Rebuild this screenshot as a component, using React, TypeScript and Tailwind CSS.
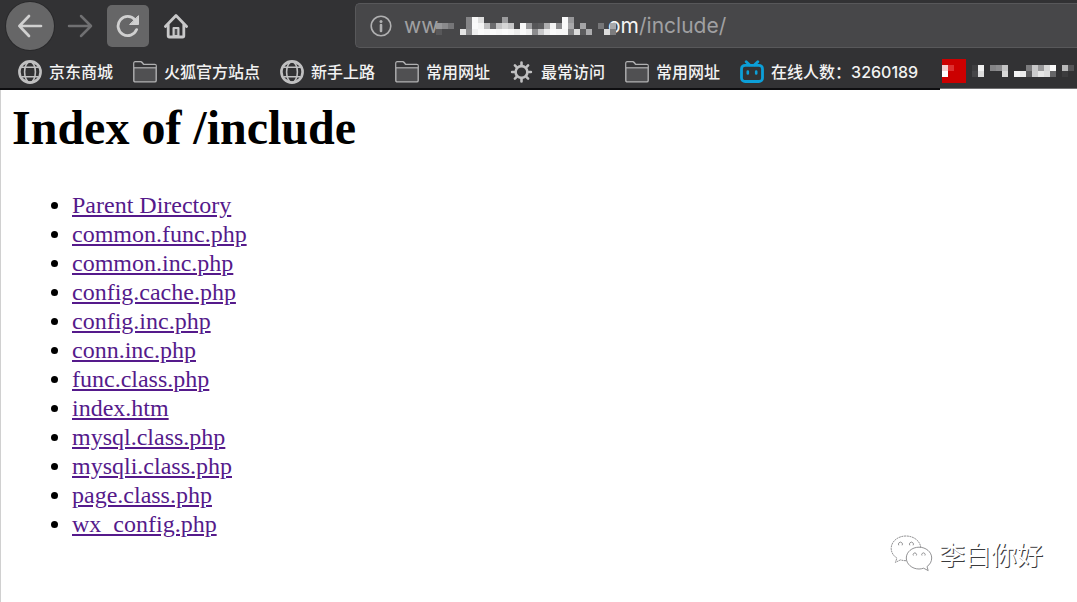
import React from "react";

type Cell = [x: number, y: number, fill: string];

const hostCells: Cell[] = [
  [0, 1, "#98989a"], [1, 1, "#8a8a8c"], [2, 1, "#767678"], [0, 2, "#58585a"],
  [4, 2, "#e4e4e4"],
  [5, 0, "#858587"], [5, 1, "#858587"], [5, 2, "#8c8c8e"],
  [6, 0, "#f8f8f8"], [6, 1, "#fafafa"], [6, 2, "#f0f0f0"],
  [7, 0, "#dedede"], [7, 1, "#f4f4f4"], [7, 2, "#fafafa"],
  [8, 1, "#bebebf"], [8, 2, "#f6f6f6"],
  [9, 1, "#6c6c6e"], [9, 2, "#fafafa"],
  [10, 1, "#c2c2c3"], [10, 2, "#f6f6f6"],
  [11, 0, "#9c9c9e"], [11, 1, "#d6d6d6"], [11, 2, "#fafafa"],
  [12, 1, "#c6c6c7"], [12, 2, "#f6f6f6"],
  [13, 2, "#ececec"],
  [14, 1, "#fafafa"], [14, 2, "#fafafa"],
  [15, 1, "#9c9c9e"], [15, 2, "#f0f0f0"],
  [16, 1, "#565658"], [16, 2, "#8c8c8e"],
  [17, 1, "#5c5c5e"], [17, 2, "#c8c8c9"],
  [18, 1, "#aeaeaf"], [18, 2, "#ececec"],
  [19, 1, "#f4f4f4"], [19, 2, "#fafafa"],
  [20, 1, "#8c8c8e"], [20, 2, "#f6f6f6"],
  [21, 0, "#fafafa"], [21, 1, "#fafafa"], [21, 2, "#f6f6f6"],
  [22, 0, "#98989a"], [22, 1, "#a8a8aa"], [22, 2, "#828284"],
  [23, 2, "#dcdcdc"],
  [24, 1, "#a4a4a6"], [24, 2, "#5c5c5e"],
  [25, 2, "#acacae"],
  [27, 1, "#767678"],
  [28, 2, "#dcdcdc"],
  [29, 1, "#a8a8aa"], [29, 2, "#7c7c7e"],
];

const titleCells: Cell[] = [
  [0, 0, "#3e3e40"], [0, 1, "#464648"],
  [1, 0, "#f0f0f0"], [1, 1, "#dcdcdc"],
  [3, 0, "#848486"], [4, 0, "#8c8c8e"],
  [5, 0, "#c4c4c5"], [5, 1, "#d8d8d8"],
  [7, 1, "#f4f4f4"], [8, 1, "#ececec"],
  [9, 0, "#7c7c7e"], [9, 1, "#5c5c5e"],
  [10, 0, "#c8c8c9"], [10, 1, "#cccccd"],
  [11, 0, "#98989a"], [11, 1, "#e6e6e6"],
  [12, 0, "#d6d6d6"], [12, 1, "#dcdcdc"],
  [13, 0, "#fafafa"], [13, 1, "#666668"],
  [15, 0, "#b8b8b9"], [15, 1, "#3c3c3e"],
  [16, 0, "#545456"],
];

function Pixels({ cells, columns, rows, className }: { cells: Cell[]; columns: number; rows: number; className?: string }) {
  return (
    <svg
      aria-hidden="true"
      width={columns * 6}
      height={rows * 6}
      viewBox={`0 0 ${columns} ${rows}`}
      shapeRendering="crispEdges"
      className={className}
    >
      {cells.map(([x, y, fill]) => (
        <rect key={`${x}-${y}`} x={x} y={y} width="1" height="1" fill={fill} />
      ))}
    </svg>
  );
}

function GlobeIcon() {
  return (
    <svg aria-hidden="true" width="24" height="24" viewBox="0 0 24 24" fill="none" stroke="#c0c0c1">
      <circle cx="12" cy="12" r="10.6" strokeWidth="2.6" />
      <ellipse cx="12" cy="12" rx="5.4" ry="10.4" strokeWidth="1.6" />
      <path d="M3.5 7.2h17M3.5 16.800h17" strokeWidth="1.5" />
    </svg>
  );
}

function FolderIcon() {
  return (
    <svg aria-hidden="true" width="24" height="24" viewBox="0 0 24 24" fill="none" stroke="#b0b0b1" strokeWidth="1.4" strokeLinejoin="round">
      <path d="M.8 20.4V3.400c0-1 .5-1.6 1.500-1.600h5.400c.8 0 1.200.3 1.700.9l1.300 1.700h11c1 0 1.500.6 1.500 1.500v14.500c0 1-.5 1.500-1.500 1.500H2.300c-1 0-1.500-.5-1.500-1.500Z" fill="#505052" />
      <path d="M1.500 2.500h6.200l2 2.600h12.800V7.500H1.500Z" fill="#353537" stroke="none" />
      <path d="M1 7.800h22" strokeWidth="1.2" />
    </svg>
  );
}

function GearIcon() {
  return (
    <svg aria-hidden="true" width="24" height="24" viewBox="0 0 24 24" fill="none" stroke="#c0c0c1" strokeLinecap="round">
      <circle cx="11.5" cy="12" r="5.9" strokeWidth="2.600" />
      <path d="M11.5 5V2.600M11.5 19v2.400M4.500 12H2.100M18.500 12h2.400M6.600 7.100 4.900 5.400M16.400 7.100l1.700-1.700M6.600 16.900l-1.700 1.700M16.400 16.900l1.700 1.700" strokeWidth="2.600" />
    </svg>
  );
}

function TvIcon() {
  return (
    <svg aria-hidden="true" width="24" height="24" viewBox="0 0 24 24" fill="none" stroke="#0c9fd8" strokeWidth="2.8" strokeLinecap="round" strokeLinejoin="round">
      <rect x="1.500" y="5.300" width="21" height="16.200" rx="3.600" />
      <path d="m6.200 1.800 3.200 3M17.800 1.800l-3.200 3" />
      <path d="M7.800 11.600v1.800M16.200 11.600v1.800" strokeWidth="2.600" />
    </svg>
  );
}

const bookmarks = [
  { label: "京东商城", Icon: GlobeIcon },
  { label: "火狐官方站点", Icon: FolderIcon },
  { label: "新手上路", Icon: GlobeIcon },
  { label: "常用网址", Icon: FolderIcon },
  { label: "最常访问", Icon: GearIcon },
  { label: "常用网址", Icon: FolderIcon },
  { label: "在线人数：3260189", Icon: TvIcon },
];

const files = [
  "Parent Directory",
  "common.func.php",
  "common.inc.php",
  "config.cache.php",
  "config.inc.php",
  "conn.inc.php",
  "func.class.php",
  "index.htm",
  "mysql.class.php",
  "mysqli.class.php",
  "page.class.php",
  "wx_config.php",
];

function Toolbar() {
  return (
    <div className="flex h-[51px] items-center pl-1.5">
      <button aria-label="Back" className="flex size-12 shrink-0 items-center justify-center rounded-full bg-[#666667] ring-1 ring-[#29292b]">
        <svg width="26" height="26" viewBox="0 0 26 26" fill="none" stroke="#d0d0d0" strokeWidth="2.7" strokeLinecap="round" strokeLinejoin="round">
          <path d="M24 13H2.400M12 3 2.400 13 12 23" />
        </svg>
      </button>
      <button aria-label="Forward" className="ml-3 flex h-12 w-7 shrink-0 items-center justify-center">
        <svg width="26" height="26" viewBox="0 0 26 26" fill="none" stroke="#707072" strokeWidth="2.5" strokeLinecap="round" strokeLinejoin="round">
          <path d="M2 13h22M14 3l10 10-10 10" />
        </svg>
      </button>
      <button aria-label="Reload" className="ml-[13px] flex size-[42px] shrink-0 items-center justify-center rounded-[5px] bg-[#666667]">
        <svg width="24" height="24" viewBox="0 0 24 24" fill="none" stroke="#d0d0d0" strokeWidth="2.8" strokeLinecap="round" strokeLinejoin="round">
          <path d="M20.600 15.600A9.600 9.600 0 1 1 19 5.800" />
          <path d="M22.500 2v8.500H14Z" fill="#d0d0d0" strokeWidth="1" />
        </svg>
      </button>
      <button aria-label="Home" className="ml-[13px] flex h-12 w-7 shrink-0 items-center justify-center">
        <svg width="26" height="26" viewBox="0 0 26 26" fill="none" stroke="#c8c8c9" strokeWidth="2.800" strokeLinecap="round" strokeLinejoin="round">
          <path d="M2.400 13.500 13 2.500 23.600 13.500" />
          <path d="M5.200 12v10.800c0 .8.4 1.200 1.200 1.200h13.200c.8 0 1.200-.4 1.200-1.200V12" />
          <path d="M10.600 23v-8h4.800v8Z" fill="#505052" strokeWidth="2.200" />
        </svg>
      </button>
      <div className="ml-[165px] flex h-[45px] min-w-0 flex-1 items-center rounded-l-[5px] border border-r-0 border-[#58585a] bg-[#474749] pl-3.5 text-[21px] whitespace-pre">
        <svg className="mr-3 shrink-0" width="22" height="22" viewBox="0 0 22 22" fill="none" stroke="#b0b0b1">
          <circle cx="11" cy="11" r="9.800" strokeWidth="1.600" />
          <path d="M11 10v6" strokeWidth="2.600" strokeLinecap="round" />
          <circle cx="11" cy="6.400" r="1.500" fill="#b0b0b1" stroke="none" />
        </svg>
        <span className="w-8 shrink-0 text-[#a0a0a2]">ww</span>
        <Pixels cells={hostCells} columns={30} rows={3} className="relative z-10 shrink-0" />
        <span className="-ml-2 text-[#f4f4f4]">om</span>
        <span className="text-[#a0a0a2]">/include/</span>
      </div>
    </div>
  );
}

function BookmarkBar() {
  return (
    <div className="flex">
      <nav aria-label="Bookmarks" className="flex h-[39px] shrink-0 gap-5 border-b-2 border-[#0e0e10] pr-[22px] pl-[18px] whitespace-nowrap">
        {bookmarks.map(({ label, Icon }, i) => (
          <a key={i} href="#" className="flex items-center gap-[7px] pt-1 text-[16px] font-medium text-[#f2f2f2]">
            <Icon />
            {label}
          </a>
        ))}
      </nav>
      <a href="#" aria-label="Bookmark" className="flex h-[38px] min-w-0 flex-1 items-center gap-1.5 overflow-hidden border-b border-[#707072] pt-[3px] pl-0.5">
        <svg aria-hidden="true" className="shrink-0" width="24" height="24" viewBox="0 0 4 4" shapeRendering="crispEdges">
          <rect width="4" height="4" fill="#cc0000" />
          <rect y="1" width="1" height="1" fill="#f4d0d0" />
          <rect x="1" y="1" width="1" height="1" fill="#dc3030" />
          <rect y="2" width="1" height="1" fill="#ffffff" />
        </svg>
        <Pixels cells={titleCells} columns={17} rows={2} className="shrink-0" />
      </a>
    </div>
  );
}

export default function App() {
  return (
    <div className="relative flex min-h-screen flex-col bg-white">
      <header className="bg-[#323234] font-['Inter','Noto_Sans_CJK_SC',sans-serif]">
        <Toolbar />
        <div className="bg-[linear-gradient(#323234_0_37px,#ffffff_37px)]">
          <BookmarkBar />
        </div>
      </header>
      <main className="flex-1 border-l border-[#d0d0d0] pl-[11px] font-['Liberation_Serif',serif] text-black">
        <h1 className="pt-2.5 text-[48px] leading-[56px] font-bold">Index of /include</h1>
        <ul className="mt-[35px] list-disc pl-[60px] text-[24px] leading-[29px]">
          {files.map((name) => (
            <li key={name}>
              <a href="#" className="text-[#551a8b] underline">{name}</a>
            </li>
          ))}
        </ul>
      </main>
      <div className="absolute right-[34px] bottom-[30px] flex items-center gap-1.5 font-['Noto_Sans_CJK_SC',sans-serif]">
        <svg aria-hidden="true" width="43" height="37" viewBox="0 0 43 37" fill="#ffffff" stroke="#77777a" strokeWidth=".8" strokeLinejoin="round">
          <path d="M16 1C7.800 1 1.200 6.500 1.200 13.400c0 4 2.200 7.400 5.700 9.700l-1.500 4.300 5-2.500c1.800.5 3.600.8 5.600.8 8.200 0 14.800-5.500 14.800-12.300S24.200 1 16 1Z" strokeDasharray="2 .6" />
          <path d="M29 12.200c-7 0-12.700 4.800-12.700 10.800S22 34 29 34c1.600 0 3.200-.3 4.600-.8l4.600 2.400-1.200-4c2.900-2 4.700-5.100 4.700-8.600 0-6-5.700-10.800-12.700-10.800Z" />
          <path d="M8.800 10.300a2 2 0 1 1 3.300 0M19.800 10.300a2 2 0 1 1 3.300 0M23.400 20.500a1.700 1.700 0 1 1 2.900 0M32 20.500a1.700 1.700 0 1 1 2.900 0" fill="none" />
        </svg>
        <span className="text-[26px] leading-9 text-white [text-shadow:1px_1px_0_#3a3a3c]">李白你好</span>
      </div>
    </div>
  );
}
